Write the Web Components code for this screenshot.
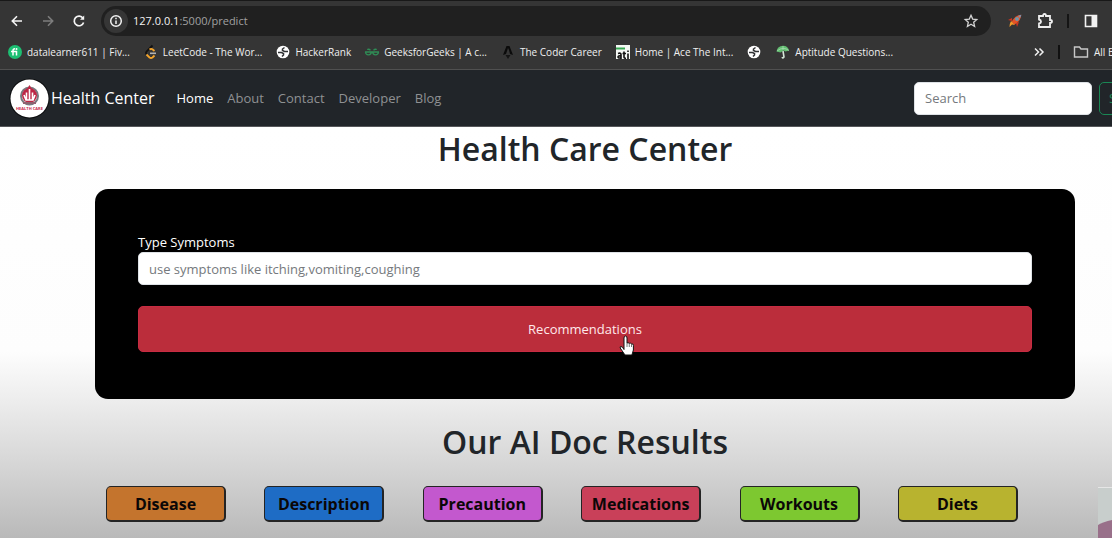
<!DOCTYPE html>
<html lang="en">
<head>
<meta charset="utf-8">
<title>Health Center</title>
<style>
html { background: #fff; }
body { margin: 0; min-height: 100vh; overflow: hidden; font-family: "Open Sans", "Noto Sans", sans-serif; color: #212529; position: relative; }
</style>
</head>
<body>
<browser-toolbar></browser-toolbar>
<bookmarks-bar>
  <bookmark-link icon="fiverr">datalearner611 | Fiv...</bookmark-link>
  <bookmark-link icon="leetcode">LeetCode - The Wor...</bookmark-link>
  <bookmark-link icon="globe">HackerRank</bookmark-link>
  <bookmark-link icon="geeks">GeeksforGeeks | A c...</bookmark-link>
  <bookmark-link icon="coder">The Coder Career</bookmark-link>
  <bookmark-link icon="ati">Home | Ace The Int...</bookmark-link>
  <bookmark-link icon="globe"></bookmark-link>
  <bookmark-link icon="umbrella">Aptitude Questions...</bookmark-link>
</bookmarks-bar>
<site-navbar></site-navbar>
<health-page></health-page>

<script>
const define = (name, html) => {
  const template = document.createElement('template');
  template.innerHTML = html;
  customElements.define(name, class extends HTMLElement {
    constructor() {
      super();
      this.attachShadow({ mode: 'open' }).append(template.content.cloneNode(true));
    }
  });
};

const icons = {
  fiverr: '<circle cx="8" cy="8" r="7" fill="#1dbf73"/><path d="M4 7.500h5.500v4M6 11.500V6.500q0-1.800 2-1.800" fill="none" stroke="#fff" stroke-width="1.500"/><circle cx="9.500" cy="5" r="1" fill="#fff"/>',
  leetcode: '<path d="M9.500 1.500 3.500 7.500q-1.200 1.500 0 3" fill="none" stroke="#111" stroke-width="1.800"/><path d="m3.500 10.500 3 3q1.500 1 3 0l2-2M6.500 5.500q1.700-1.300 3.200 0l1.800 1.500" fill="none" stroke="#f5a52b" stroke-width="1.800"/><path d="M7 9.300h6" stroke="#b3b3b3" stroke-width="1.600"/>',
  globe: '<circle cx="8" cy="8" r="6.300" fill="#fff"/><path d="M3 8.500h3.500l2 1v1.500L7 12.500M13 7.500H9.500L7.500 6.500V5L9.500 3.500" fill="none" stroke="#303234" stroke-width="1.500"/>',
  geeks: '<path d="M6.500 6.200Q5 4.800 3.200 5.500M1 8h14M7.300 8q0 2.800-2.800 2.800T1.500 8M9.500 6.200q1.500-1.400 3.300-.7M8.700 8q0 2.800 2.800 2.800T14.500 8" fill="none" stroke="#2f8d56" stroke-width="1.300"/>',
  coder: '<path d="M6.500 2h3L13 11l-3-1-1-4-1-2-1 3-1 3-3 1z" fill="#0b0b0b"/><path d="M5.500 11h5L8 15z" fill="#151515"/>',
  ati: '<path d="M1 1h14v14H1z" fill="#f5f8f5"/><path d="M1 3.500h9v2H1z" fill="#36a852"/><path d="M3 9.500q3-1 3 1V15M6 12q-3-.5-3 1t3 .8M9 7.500V13q0 1.300 2 1.300M7.500 9.500H11M13 9.500V15M13 6.500v1.500" fill="none" stroke="#111" stroke-width="1.600"/>',
  umbrella: '<path d="M1.500 7.500Q2.500 2 8 1.800q5 .2 6 4.700l-3.500 1-2-1-3 2z" fill="#62bd70"/><path d="M2 7q6-5 12-.5M8 2v4" fill="none" stroke="#a4ddb0" stroke-width=".8"/><path d="m8 7 1 6q-1 2-2 .2" fill="none" stroke="#d6e8da" stroke-width="1.600"/>'
};

define('browser-toolbar', `
<style>
:host { display: flex; align-items: center; height: 36px; padding: 4px 0 0; box-sizing: border-box; background: #353535; border-top: 1px solid #181818; overflow: hidden; }
button { border: 0; padding: 0; background: none; display: flex; flex: none; }
.nav { display: flex; gap: 15px; padding: 0 14px 0 9px; }
form { flex: 1; min-width: 0; height: 30px; display: flex; align-items: center; border-radius: 15px; background: #202020; padding: 0 12px 0 3px; }
.info { width: 24px; height: 24px; border-radius: 12px; background: #363636; align-items: center; justify-content: center; }
.url { flex: 1; margin-left: 5px; font-size: 11px; line-height: 20px; color: #a0a0a0; }
.url b { font-weight: 400; color: #f4f4f4; }
.tools { display: flex; align-items: center; gap: 13px; padding: 0 12px 0 16px; }
.tools .bar { width: 2px; height: 14px; background: #151515; }
.tools svg { display: block; }
</style>
<div class="nav">
  <button aria-label="Back"><svg width="16" height="16" viewBox="0 0 16 16" fill="none" stroke="#f5f5f5" stroke-width="1.600"><path d="M13 8H3.500M8 3.300 3.300 8 8 12.700"/></svg></button>
  <button aria-label="Forward"><svg width="16" height="16" viewBox="0 0 16 16" fill="none" stroke="#7d7d7d" stroke-width="1.600"><path d="M3 8h9.500M8 3.300 12.700 8 8 12.700"/></svg></button>
  <button aria-label="Reload"><svg width="16" height="16" viewBox="0 0 16 16" fill="none" stroke="#f5f5f5" stroke-width="1.700"><path d="M12.600 9.500A4.800 4.800 0 1 1 12 5.200"/><path d="M13.200 2.500v4.200H9z" fill="#f5f5f5" stroke="none"/></svg></button>
</div>
<form>
  <button type="button" class="info" aria-label="Site information"><svg width="16" height="16" viewBox="0 0 16 16" fill="none" stroke="#f2f2f2" stroke-width="1.500"><circle cx="8" cy="8" r="5.300"/><path d="M8 7.500V11M8 4.800v1.500"/></svg></button>
  <div class="url" role="textbox" aria-label="Address"><b>127.0.0.1</b>:5000/predict</div>
  <button type="button" aria-label="Bookmark"><svg width="16" height="16" viewBox="0 0 16 16" fill="none" stroke="#d4d4d4" stroke-width="1.300"><path d="m8 2.300 1.700 3.800 4.100.4-3.100 2.800.9 4.200L8 11.300l-3.600 2.200.9-4.200-3.100-2.800 4.100-.4z"/></svg></button>
</form>
<div class="tools">
  <button aria-label="Rocket"><svg width="16" height="16" viewBox="0 0 16 16"><path d="m5 5-4 2 4 1zM9 10l1 4 2-5z" fill="#cc321f"/><path d="M4.500 9Q8 2 14.300 1.700 14 8 7.500 11.500z" fill="#e65226"/><path d="m4 8 4 4-3-.5L2.500 14l.3-3z" fill="#f49b28"/><circle cx="10" cy="6" r="2" fill="#6f96aa"/><path d="M11 3q1.500-1 3.300-1.300Q14 3.500 13 5z" fill="#7890ad"/></svg></button>
  <button aria-label="Extensions"><svg width="18" height="18" viewBox="0 0 18 18" fill="none" stroke="#efefef" stroke-width="1.800"><path d="M3 4h4q0-2 1.500-2T10 4h4v4q2 0 2 1.500T14 11v4H3v-3.500q2-.2 2-1.900T3 7.500z"/></svg></button>
  <span class="bar"></span>
  <button aria-label="Side panel"><svg width="18" height="16" viewBox="0 0 18 16"><path d="M3.500 2.500h11v11h-11z" fill="none" stroke="#f2f2f2" stroke-width="1.600"/><path d="M9.500 2H15v12H9.500z" fill="#f2f2f2"/></svg></button>
</div>`);

define('bookmarks-bar', `
<style>
:host { display: flex; align-items: center; height: 34px; padding: 0 0 2px 7px; background: #353535; border-bottom: 1px solid #505050; box-sizing: border-box; overflow: hidden; }
nav { display: flex; gap: 13px; flex: 1; min-width: 0; }
.end { flex: none; display: flex; align-items: center; width: 79px; gap: 13px; overflow: hidden; white-space: nowrap; color: #f0f0f0; font-size: 10px; }
button { border: 0; padding: 0; background: none; color: inherit; font: inherit; display: flex; align-items: center; gap: 5px; flex: none; }
.bar { flex: none; width: 2px; height: 14px; background: #111; }
</style>
<nav aria-label="Bookmarks"><slot></slot></nav>
<div class="end">
  <button aria-label="More bookmarks"><svg width="12" height="12" viewBox="0 0 12 12" fill="none" stroke="#f0f0f0" stroke-width="1.500"><path d="m2 2.500 3.500 3.500L2 9.500M6.500 2.500 10 6 6.500 9.500"/></svg></button>
  <span class="bar"></span>
  <button><svg width="16" height="14" viewBox="0 0 16 14" fill="none" stroke="#c8c8c8" stroke-width="1.400"><path d="M1.500 2h5L8 4h6.500v8h-13z"/></svg>All Bookmarks</button>
</div>`);

customElements.define('bookmark-link', class extends HTMLElement {
  constructor() {
    super();
    this.attachShadow({ mode: 'open' });
  }
  connectedCallback() {
    this.shadowRoot.innerHTML = `
<style>
:host { display: block; flex: none; }
a { display: flex; align-items: center; gap: 4px; color: #f0f0f0; font-size: 10px; line-height: 16px; text-decoration: none; white-space: nowrap; }
</style>
<a href="#" aria-label="${this.getAttribute('icon')} bookmark"><svg width="16" height="16" viewBox="0 0 16 16">${icons[this.getAttribute('icon')]}</svg><slot></slot></a>`;
  }
});

define('site-navbar', `
<style>
:host { display: flex; align-items: center; height: 56px; padding-left: 9px; background: #212529; border-bottom: 1px solid #56575a; overflow: hidden; white-space: nowrap; }
a { text-decoration: none; }
.brand { display: flex; align-items: center; gap: 1px; color: #fff; font-size: 16px; }
.brand svg { border-radius: 50%; }
nav { display: flex; gap: 14px; margin-left: 22px; flex: 1; font-size: 13px; }
nav a { color: #8f9193; }
nav a.active { color: #fff; }
form { flex: none; width: 198px; display: flex; gap: 7px; }
input { flex: none; width: 178px; height: 33px; box-sizing: border-box; padding: 0 10px; border: 1px solid #dee2e6; border-radius: 5px; font: inherit; font-size: 13px; background: #fff; }
input::placeholder { color: #75797d; opacity: 1; }
button { flex: none; height: 33px; padding: 0 9px; border: 1px solid #198754; border-radius: 5px; background: none; color: #198754; font: inherit; font-size: 13px; }
</style>
<a class="brand" href="#"><svg width="41" height="41" viewBox="0 0 41 41"><circle cx="20.500" cy="20.500" r="20" fill="#0b0c0e"/><circle cx="20.500" cy="20.500" r="19" fill="#fff"/><circle cx="20.500" cy="18" r="8.500" fill="none" stroke="#777b80" stroke-width="2"/><circle cx="20.500" cy="17.500" r="7.500" fill="#bd2745"/><path d="m20.500 7 3 5h-6z" fill="#bd2745"/><path d="M20.500 11v11M17.500 14.500v7M23.500 14.500v7M15 17l2 5h7l2-5" fill="none" stroke="#fff" stroke-width="1.600"/><path d="M14 25h13" stroke="#8e6270" stroke-width="2"/><text x="20.500" y="32" text-anchor="middle" font-size="4" font-weight="700" fill="#c82b4b">HEALTH CARE</text></svg>Health Center</a>
<nav><a class="active" href="#">Home</a><a href="#">About</a><a href="#">Contact</a><a href="#">Developer</a><a href="#">Blog</a></nav>
<form><input type="search" placeholder="Search" aria-label="Search"><button type="button">Search</button></form>`);

define('symptom-form', `
<style>
:host { display: block; background: #000; border-radius: 13px; padding: 43px; }
form { display: flex; flex-direction: column; color: #fff; font-size: 13px; }
label { line-height: 20px; }
input { height: 33px; box-sizing: border-box; padding: 0 10px; border: 1px solid #dee2e6; border-radius: 5px; font: inherit; background: #fff; margin-bottom: 21px; }
input::placeholder { color: #75797d; opacity: 1; }
button { position: relative; height: 46px; border: 1px solid #c72b42; border-radius: 5px; background: #bb2d3b; color: #ffe9eb; font: inherit; }
.pointer { position: absolute; left: calc(50% + 34px); top: 28px; }
.hold { height: 4px; }
</style>
<form>
  <label for="symptoms">Type Symptoms</label>
  <input id="symptoms" type="text" placeholder="use symptoms like itching,vomiting,coughing">
  <button type="button">Recommendations<svg class="pointer" width="16" height="22" viewBox="0 0 16 22"><path d="M5 12V3q0-2 1.500-2T8 3v5q1.200-.8 2.200.4 1.200-.8 2.200.5 2-.6 2 1.600V15l-1.500 5H6l-4.800-7q-.4-1.500.8-1.500 1.500 0 3 3z" fill="#fff" stroke="#111"/><path d="M8 8v4M10.300 8.500V12M12.500 9v3" stroke="#555" fill="none" stroke-width=".8"/></svg></button>
  <div class="hold"></div>
</form>`);

define('result-button', `
<style>
:host { display: block; width: 120px; flex: none; }
button { width: 100%; height: 36px; padding: 0; border: 1px solid #242424; border-right-width: 2px; border-bottom-width: 2px; border-radius: 5px; background: var(--tone); color: #0b0707; font: inherit; font-size: 16px; font-weight: 700; }
</style>
<button type="button"><slot></slot></button>`);

define('webcam-preview', `
<style>:host { display: block; overflow: hidden; } svg { display: block; }</style>
<svg width="14" height="51" viewBox="0 0 14 51"><path d="M0 0h14v51H0z" fill="#c8cecc"/><path d="M0 0h14v1H0z" fill="#e6e6e6"/><path d="M0 38q5-3 14-5v18H0z" fill="#99708a"/></svg>`);

define('health-page', `
<style>
:host { display: block; min-height: calc(100vh - 127px); box-sizing: border-box; padding: 0 37px 16px 95px; background: linear-gradient(#fff 0, #fdfdfd 225px, #ededed 273px, #d5d5d5 340px, #b9b9b9 411px); }
h1 { margin: 0; text-align: center; font-weight: 600; font-size: 32px; line-height: 44px; }
h1:first-of-type { padding-bottom: 18px; }
h1:last-of-type { padding: 21px 0 22px; }
.results { display: flex; justify-content: space-between; padding: 0 57px 0 11px; }
webcam-preview { position: absolute; right: 0; bottom: 0; }
</style>
<h1>Health Care Center</h1>
<symptom-form></symptom-form>
<h1>Our AI Doc Results</h1>
<div class="results">
  <result-button style="--tone:#c4742d">Disease</result-button>
  <result-button style="--tone:#1e6cc5">Description</result-button>
  <result-button style="--tone:#c358ce">Precaution</result-button>
  <result-button style="--tone:#c94059">Medications</result-button>
  <result-button style="--tone:#7dc830">Workouts</result-button>
  <result-button style="--tone:#b8b32f">Diets</result-button>
</div>
<webcam-preview></webcam-preview>`);
</script>
</body>
</html>
